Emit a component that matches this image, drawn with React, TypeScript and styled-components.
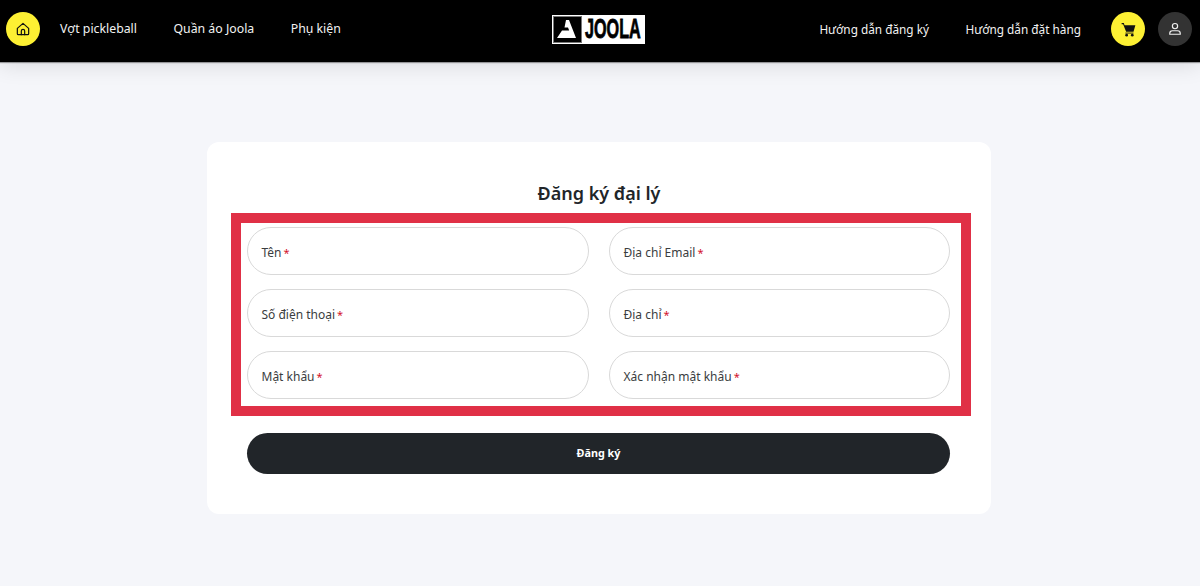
import React from 'react';
import styled, { createGlobalStyle } from 'styled-components';

const GlobalStyle = createGlobalStyle`
  html, body { margin: 0; padding: 0; background: #f5f6fa; }
  body { font-family: "Noto Sans", "Open Sans", sans-serif; }
  * { box-sizing: border-box; }
`;

const Page = styled.div`
  width: 1200px;
  height: 586px;
  overflow: hidden;
  background: #f5f6fa;
`;

const Header = styled.header`
  height: 62px;
  background: #000;
  display: grid;
  grid-template-columns: 1fr auto 1fr;
  align-items: center;
  padding: 0 8px 4px 6px;
  box-shadow: 0 1px 1px rgba(0, 0, 0, 0.35), 0 3px 22px rgba(0, 0, 0, 0.12);
`;

const NavSide = styled.nav<{ $end?: boolean }>`
  display: flex;
  align-items: center;
  justify-content: ${(p) => (p.$end ? 'flex-end' : 'flex-start')};
`;

const NavLink = styled.a<{ $gap?: number }>`
  color: #f2f2f2;
  font-size: 12.3px;
  line-height: 16px;
  white-space: nowrap;
  margin-left: ${(p) => p.$gap ?? 36.5}px;
`;

const WideNavLink = styled(NavLink)`
  font-size: 11.8px;
`;

const RoundButton = styled.button<{ $dark?: boolean }>`
  width: 34px;
  height: 34px;
  border-radius: 50%;
  border: 0;
  padding: 0;
  display: flex;
  align-items: center;
  justify-content: center;
  background: ${(p) => (p.$dark ? '#333333' : '#fdf033')};
  color: ${(p) => (p.$dark ? '#f0f0f0' : '#111')};
  margin-left: ${(p) => (p.$dark ? 13 : 0)}px;
`;

const CartButton = styled(RoundButton)`
  margin-left: 30px;
`;

const Logo = styled.div`
  display: flex;
  width: 93px;
  height: 29px;
  background: #fff;
  border: 1px solid #fff;
  margin: 0 2px 0 0;
`;

const LogoMark = styled.div`
  width: 29px;
  background: #000;
  border: 1px solid #777;
  display: flex;
  align-items: flex-end;
  justify-content: center;
  padding-bottom: 4px;
`;

const LogoText = styled.span`
  width: 58px;
  margin-left: 3px;
  color: #000;
  font-family: "Liberation Sans", sans-serif;
  font-weight: 700;
  font-size: 27px;
  line-height: 27px;
  transform: scaleX(0.6);
  transform-origin: left center;
  -webkit-text-stroke: 0.8px #000;
  white-space: nowrap;
`;

const Main = styled.main`
  display: flex;
  justify-content: center;
`;

const Card = styled.section`
  width: 784px;
  height: 372px;
  margin: 80px 2px 0 0;
  background: #fff;
  border-radius: 12px;
  padding-top: 38px;
`;

const Title = styled.h1`
  margin: 0 0 6px;
  font-size: 18px;
  line-height: 27px;
  font-weight: 600;
  text-align: center;
  color: #212529;
`;

const Highlight = styled.div`
  margin: 0 20px 0 24px;
  height: 203px;
  border: 10px solid #e03046;
  padding: 4px 10px 0 6px;
`;

const FieldGrid = styled.div`
  display: grid;
  grid-template-columns: 342px 341px;
  column-gap: 20px;
  row-gap: 14px;
`;

const Field = styled.div`
  height: 48px;
  border: 1px solid #d9d9d9;
  border-radius: 24px;
  background: #fff;
  padding: 2px 14px 0 13.5px;
  display: flex;
  align-items: center;
  font-size: 12px;
  color: #3a3d40;
`;

const Req = styled.span`
  color: #d3122a;
  font-size: 11px;
  margin-left: 2px;
`;

const Submit = styled.button`
  display: block;
  width: 703px;
  height: 41px;
  margin: 17px 0 0 40px;
  padding: 0 0 2px;
  border: 0;
  border-radius: 21px;
  background: #212529;
  color: #fff;
  font-family: inherit;
  font-size: 10.8px;
  font-weight: 700;
`;

const HomeIcon = () => (
  <svg width="16" height="16" viewBox="0 0 24 24" fill="none" stroke="currentColor" strokeWidth="1.8" strokeLinejoin="round" strokeLinecap="round">
    <path d="M3.5 11 12 3.5 20.5 11v8a1.5 1.5 0 0 1-1.5 1.5H5A1.5 1.5 0 0 1 3.5 19z" />
    <path d="M9.5 20.5V15a2.5 2.5 0 0 1 5 0v5.5" />
  </svg>
);

const CartIcon = () => (
  <svg width="15" height="15" viewBox="0 0 24 24" fill="currentColor">
    <path d="M1 1.5h3.6l1 3.5H23l-3 10.5H8.2L3.4 3.5H1z" />
    <path d="M7 17h13v1.4H7z" />
    <circle cx="9" cy="21" r="2.2" />
    <circle cx="18" cy="21" r="2.2" />
  </svg>
);

const UserIcon = () => (
  <svg width="14" height="14" viewBox="0 0 24 24" fill="none" stroke="currentColor" strokeWidth="2">
    <circle cx="12" cy="7" r="4.5" />
    <path d="M3 21v-1.5a4.5 4.5 0 0 1 4.5-4.5h9a4.5 4.5 0 0 1 4.5 4.5V21z" />
  </svg>
);

const fields = ['Tên', 'Địa chỉ Email', 'Số điện thoại', 'Địa chỉ', 'Mật khẩu', 'Xác nhận mật khẩu'];

export default function App() {
  return (
    <Page>
      <GlobalStyle />
      <Header>
        <NavSide>
          <RoundButton aria-label="Trang chủ"><HomeIcon /></RoundButton>
          <NavLink $gap={20}>Vợt pickleball</NavLink>
          <NavLink>Quần áo Joola</NavLink>
          <NavLink>Phụ kiện</NavLink>
        </NavSide>
        <Logo>
          <LogoMark>
            <svg width="20" height="18" viewBox="0 0 20 18" fill="#fff">
              <path d="M9 0h3l7 18H0l5-7.5h7.2L11 7.5H7.5z" />
            </svg>
          </LogoMark>
          <LogoText>JOOLA</LogoText>
        </Logo>
        <NavSide $end>
          <WideNavLink>Hướng dẫn đăng ký</WideNavLink>
          <WideNavLink>Hướng dẫn đặt hàng</WideNavLink>
          <CartButton aria-label="Giỏ hàng"><CartIcon /></CartButton>
          <RoundButton $dark aria-label="Tài khoản"><UserIcon /></RoundButton>
        </NavSide>
      </Header>
      <Main>
        <Card>
          <Title>Đăng ký đại lý</Title>
          <Highlight>
            <FieldGrid>
              {fields.map((label) => (
                <Field key={label}>
                  {label}
                  <Req>*</Req>
                </Field>
              ))}
            </FieldGrid>
          </Highlight>
          <Submit>Đăng ký</Submit>
        </Card>
      </Main>
    </Page>
  );
}
